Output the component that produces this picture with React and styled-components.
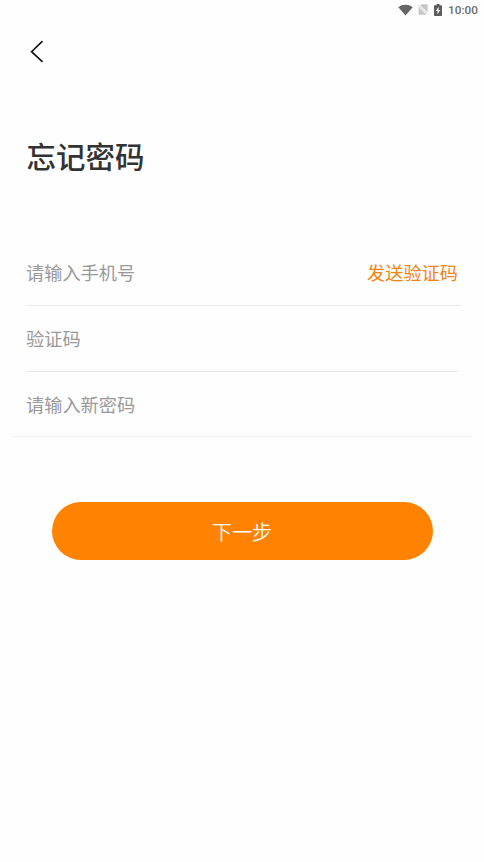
import React, { useState } from 'react';
import styled, { createGlobalStyle } from 'styled-components';

const GlobalStyle = createGlobalStyle`
  * {
    box-sizing: border-box;
  }
  body {
    margin: 0;
    background-color: #fefefe;
    font-family: "Noto Sans CJK SC", sans-serif;
  }
`
const Page = styled.div`
  height: 862px;
  display: flex;
  flex-direction: column;
  overflow: hidden;
`
const StatusBar = styled.div`
  height: 20px;
  padding-right: 6px;
  display: flex;
  align-items: center;
  justify-content: flex-end;
`
const StatusIcon = styled.svg`
  display: block;
  margin: 0 ${(props) => props.$gap}px 1px 0;
`
const Clock = styled.span`
  width: 30px;
  font-family: Roboto, sans-serif;
  font-size: 11.8px;
  font-weight: 500;
  line-height: 20px;
  color: #6a6a6a;
  white-space: nowrap;
`
const Header = styled.header`
  height: 64px;
  padding: 20px 0 0 30px;
`
const BackButton = styled.button`
  display: block;
  padding: 0;
  border: none;
  background: none;
  cursor: pointer;
`
const BackIcon = styled.svg`
  display: block;
`
const Title = styled.h1`
  margin: 49px 0 0 26.5px;
  font-size: 29.5px;
  font-weight: 500;
  line-height: 44px;
  color: #333;
`
const Form = styled.form`
  margin-top: 63px;
  display: flex;
  flex-direction: column;
`
const Field = styled.div`
  height: ${(props) => props.$height}px;
  margin: 0 ${(props) => props.$right}px 0 ${(props) => props.$left}px;
  padding: 0 ${(props) => 26 - props.$right}px ${(props) => props.$bottom}px ${(props) => 26 - props.$left}px;
  display: flex;
  align-items: center;
  justify-content: space-between;
  border-bottom: 1px solid ${(props) => props.$line};
`
const Input = styled.input`
  flex: 1;
  min-width: 0;
  height: 40px;
  padding: 0;
  border: none;
  outline: none;
  background: none;
  font-family: inherit;
  font-size: 18.2px;
  color: #333;

  &::placeholder {
    color: #999;
    opacity: 1;
  }
`
const SendCode = styled.button`
  padding: 0;
  border: none;
  background: none;
  font-family: inherit;
  font-size: 18.2px;
  line-height: 40px;
  color: #f28412;
  cursor: pointer;
`
const NextButton = styled.button`
  width: 381px;
  height: 58px;
  margin: 65px 0 0 51.5px;
  padding: 0;
  border: none;
  border-radius: 29px;
  background-color: #ff8200;
  font-family: inherit;
  font-size: 20.2px;
  font-weight: 350;
  color: #fff;
  cursor: pointer;
`

const App = () => {

  const [phone, setPhone] = useState('');
  const [code, setCode] = useState('');
  const [password, setPassword] = useState('');

  return (
    <Page>
      <GlobalStyle />
      <StatusBar>
        <StatusIcon $gap={5} width="15" height="12" viewBox="0 0 15 12">
          <path d="M0.3 3.2 C4.3 -0.1 10.7 -0.1 14.7 3.2 L7.5 11.6 Z" fill="#666" />
        </StatusIcon>
        <StatusIcon $gap={6} width="10" height="11" viewBox="0 0 10 11">
          <path d="M3.8 0.3 H9.6 V8.2 L2.4 1.5 Z" fill="#c6c6c6" />
          <path d="M0.6 3 L8.4 10.7 H0.6 Z" fill="#c6c6c6" />
          <path d="M0.2 0.9 L9.6 10.3" stroke="#b4b4b4" strokeWidth="0.8" />
        </StatusIcon>
        <StatusIcon $gap={6} width="8" height="12" viewBox="0 0 8 12">
          <path d="M2.5 0 H5.5 V1.2 H7.2 Q8 1.2 8 2 V11.2 Q8 12 7.2 12 H0.8 Q0 12 0 11.2 V2 Q0 1.2 0.8 1.2 H2.5 Z" fill="#5c5c5c" />
          <path d="M4.6 2.8 L1.7 7.1 H3.5 V10.3 L6.3 6 H4.6 Z" fill="#fff" />
        </StatusIcon>
        <Clock>10:00</Clock>
      </StatusBar>
      <Header>
        <BackButton type="button" aria-label="返回">
          <BackIcon width="14" height="23" viewBox="0 0 14 23" fill="none">
            <path d="M12.5 1.2 L1.6 11.7 L12.5 21.8" stroke="#111" strokeWidth="1.6" />
          </BackIcon>
        </BackButton>
      </Header>
      <Title>忘记密码</Title>
      <Form onSubmit={(e) => e.preventDefault()}>
        <Field $height={66} $left={26} $right={24} $bottom={2} $line="#ebebeb">
          <Input placeholder="请输入手机号" value={phone} onChange={(e) => setPhone(e.target.value)} />
          <SendCode type="button">发送验证码</SendCode>
        </Field>
        <Field $height={66} $left={26} $right={26} $bottom={2} $line="#e8e8e8">
          <Input placeholder="验证码" value={code} onChange={(e) => setCode(e.target.value)} />
        </Field>
        <Field $height={65} $left={12} $right={12} $bottom={0} $line="#f3f3f3">
          <Input placeholder="请输入新密码" value={password} onChange={(e) => setPassword(e.target.value)} />
        </Field>
        <NextButton type="submit">下一步</NextButton>
      </Form>
    </Page>
  )
}

export default App
